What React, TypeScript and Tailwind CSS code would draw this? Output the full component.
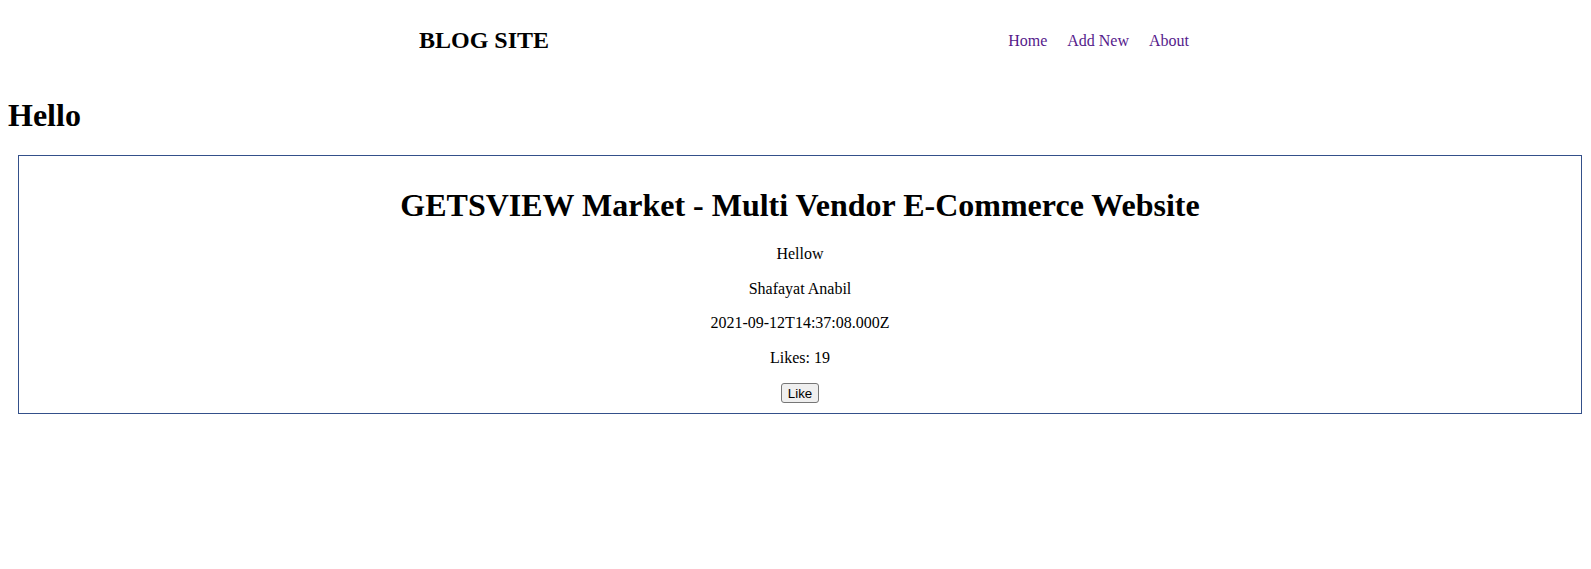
const post = {
  title: "GETSVIEW Market - Multi Vendor E-Commerce Website",
  body: "Hellow",
  author: "Shafayat Anabil",
  createdAt: "2021-09-12T14:37:08.000Z",
  likes: 19,
};

const links = ["Home", "Add New", "About"];

function Navbar() {
  return (
    <header className="flex h-[82px] items-center pl-[419px]">
      <h2 className="text-[24px] font-bold leading-[1.15]">BLOG SITE</h2>
      <nav className="ml-auto mr-[402px] flex items-center gap-5 pt-[1px]">
        {links.map((link) => (
          <a
            key={link}
            href="#"
            className="text-[16px] leading-[1.15] text-[#551a8b]"
          >
            {link}
          </a>
        ))}
      </nav>
    </header>
  );
}

function PostCard() {
  return (
    <div className="ml-[18px] mt-[21px] w-[1564px] border border-[#34508a] p-[10px] text-center">
      <h1 className="mb-[21.44px] mt-[21.44px] text-[32px] font-bold leading-[1.15]">
        {post.title}
      </h1>
      <p className="mb-4 text-[16px] leading-[1.15]">{post.body}</p>
      <p className="mb-4 text-[16px] leading-[1.15]">{post.author}</p>
      <p className="mb-4 text-[16px] leading-[1.15]">{post.createdAt}</p>
      <p className="mb-4 text-[16px] leading-[1.15]">Likes: {post.likes}</p>
      <div className="flex justify-center">
        <button
          type="button"
          className="flex h-[20px] items-center rounded-[3px] border border-[#767676] bg-[#efefef] px-[6px] font-['Liberation_Sans',Arial,sans-serif] text-[13.33px] leading-[normal] text-black"
        >
          Like
        </button>
      </div>
    </div>
  );
}

export default function App() {
  return (
    <div className="min-h-[569px] bg-white font-['Liberation_Serif','Times_New_Roman',serif] text-black">
      <Navbar />
      <h1 className="ml-2 mt-[15px] text-[32px] font-bold leading-[1.15]">Hello</h1>
      <PostCard />
    </div>
  );
}
